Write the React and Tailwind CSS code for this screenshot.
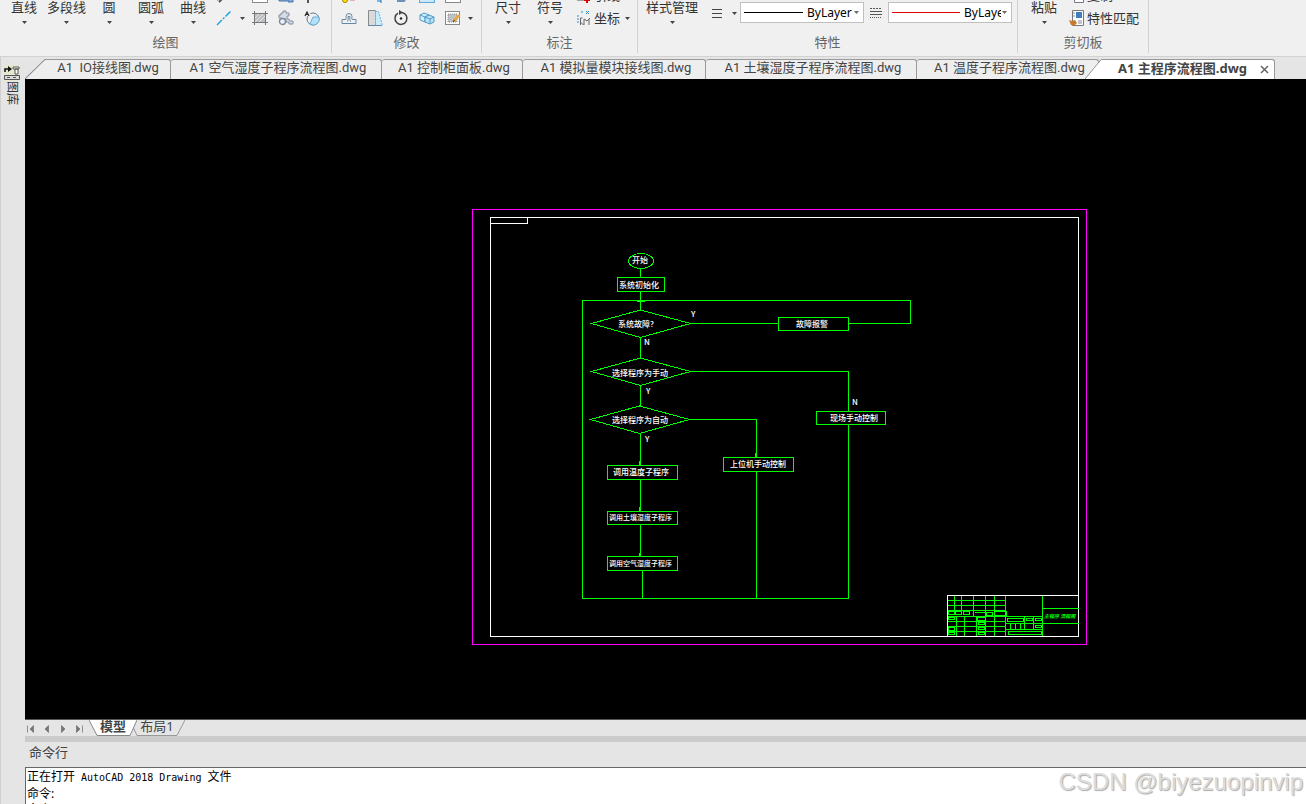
import clsx from 'clsx'

/* ── Small shared bits ───────────────────────────────── */
function Caret({ className }) {
  return (
    <svg viewBox="0 0 5 3" className={clsx('h-[3px] w-[5px] shrink-0', className)} aria-hidden="true">
      <path d="M0 0h5L2.5 3z" fill="#444" />
    </svg>
  )
}

function Icon({ children }) {
  return (
    <svg viewBox="0 0 16 16" className="h-4 w-4 shrink-0" fill="none" stroke="#555" aria-hidden="true">
      {children}
    </svg>
  )
}

function IconButton({ label, children }) {
  return (
    <button type="button" aria-label={label} className="flex h-4 w-4 shrink-0">
      <Icon>{children}</Icon>
    </button>
  )
}

function BigButton({ children, className }) {
  return (
    <button type="button" className={clsx('flex h-[26px] shrink-0 flex-col items-center whitespace-nowrap text-[13px] leading-[14px]', className)}>
      {children}
      <Caret className="mt-[7px]" />
    </button>
  )
}

function Group({ title, className, children }) {
  return (
    <section className="flex h-[53px] shrink-0 flex-col border-r border-[#d2d2d2]">
      <div className={clsx('flex h-[34px] items-start', className)}>{children}</div>
      <h2 className="text-center text-[13px] leading-4 text-[#666]">{title}</h2>
    </section>
  )
}

/* Two rows of tools; the upper one slides under the window's top edge */
function ToolRows({ children, className }) {
  return <div className={clsx('flex h-[26px] flex-col justify-end gap-[7px]', className)}>{children}</div>
}

/* ── Ribbon ──────────────────────────────────────────── */
function LineCombo({ label, lineClass, className }) {
  return (
    <div className="relative mt-0.5 -ml-px">
      <select
        aria-label={label}
        className={clsx('block h-[21px] w-[124px] appearance-none rounded-none border border-[#c0c0c0] bg-white text-[12px] leading-[18px] text-black', className)}
      >
        <option>ByLayer</option>
      </select>
      <span className={clsx('pointer-events-none absolute top-[10px] left-[4px] h-px', lineClass)} />
      <Caret className="pointer-events-none absolute top-[9px] right-[5px] opacity-80" />
    </div>
  )
}

function DrawGroup() {
  return (
    <Group title="绘图" className="w-[331px] pl-[3px]">
      <BigButton className="w-[42px]">直线</BigButton>
      <BigButton className="w-[43px]">多段线</BigButton>
      <BigButton className="w-[42px]">圆</BigButton>
      <BigButton className="w-[42px]">圆弧</BigButton>
      <BigButton className="w-[42px]">曲线</BigButton>
      <ToolRows className="ml-0.5">
        <div className="flex gap-[10px]">
          <IconButton label="射线"><path d="M3 15l4-4M1 13l3-3" strokeWidth="2" /></IconButton>
          <span />
          <IconButton label="矩形"><rect x="0.5" y="3.5" width="15" height="12" fill="#fff" stroke="#888" /></IconButton>
          <IconButton label="块"><path d="M1 9h8v5H1zM10 10h5v5h-5z" fill="#7fa9d6" stroke="#4a74a8" /></IconButton>
          <IconButton label="点"><path d="M4 12v4" strokeWidth="2" /></IconButton>
        </div>
        <div className="flex items-center gap-[10px]">
          <IconButton label="构造线">
            <path d="M1 15L15 1" stroke="#1ba1e2" strokeWidth="1.4" strokeDasharray="7 1.5 2 1.5" />
          </IconButton>
          <Caret className="-mr-[3px] -ml-0.5" />
          <IconButton label="图案填充">
            <rect x="2.5" y="3.5" width="11" height="9" fill="#bcc0c3" stroke="#777" />
            <path d="M2.5 1v14M13.5 1v14M0 3.5h16M0 12.5h16" stroke="#777" />
            <path d="M3 8l4-4M3 12l8-8M7 12l6-6" stroke="#f5f5f5" strokeWidth="0.7" />
          </IconButton>
          <IconButton label="面域">
            <path d="M5 1h3v2h3v3h-2v3h2l1 2h3v3h-4v-2H8V9H4V8H1V5h2V3h2z" fill="#d7dde6" stroke="#8290a0" />
            <circle cx="4.5" cy="11.5" r="3" fill="#eef" stroke="#7a8797" strokeWidth="1.3" />
          </IconButton>
          <IconButton label="修订云线">
            <circle cx="9" cy="9" r="6" stroke="#557f9c" />
            <path d="M9 7h6a6 6 0 01-9 7z" fill="#b5e0fa" stroke="#5b9dc8" strokeWidth="0.8" />
            <path d="M0 0h6v6H0z" fill="#f0f0f0" stroke="none" />
            <path d="M1 6l2-4 2 4M2 4.5h2" stroke="#222" strokeWidth="1.2" />
          </IconButton>
        </div>
      </ToolRows>
    </Group>
  )
}

function ModifyGroup() {
  return (
    <Group title="修改" className="w-[149px] pl-[9px]">
      <ToolRows>
        <div className="flex gap-[10px]">
          <IconButton label="删除">
            <circle cx="4" cy="13" r="2.5" fill="#ffe000" stroke="#a08a00" />
            <path d="M9 13h5" stroke="#c77" />
          </IconButton>
          <IconButton label="移动"><path d="M14 10v6M10 14h4" stroke="#1479c9" /></IconButton>
          <IconButton label="修剪"><path d="M4 14h7l2-3" stroke="#6e90b4" strokeWidth="2" /></IconButton>
          <IconButton label="阵列"><rect x="0.5" y="4.5" width="15" height="11" fill="#cbe9fb" stroke="#5aa9d6" /></IconButton>
          <IconButton label="分解"><rect x="0.5" y="4.5" width="15" height="11" fill="#fff" stroke="#888" /></IconButton>
        </div>
        <div className="flex items-center gap-[10px]">
          <IconButton label="偏移">
            <path d="M1 9.5h3c2 0 1-1 1-3a3 3 0 016 0c0 2-1 3 1 3h3" stroke="#6389a8" />
            <path d="M1 13.5h14v-4M1 13.5v-4M6 11.5c2-1 1-3 1-5h2c0 2-1 4 1 5" stroke="#6389a8" />
          </IconButton>
          <IconButton label="镜像">
            <path d="M1.5 0.5h7v15h-7z" fill="#d9dadb" stroke="#888" />
            <path d="M8.5 1.5h3l4 14h-7z" fill="#c8ecfc" stroke="#6ab4dc" strokeDasharray="2 1" />
            <path d="M1 15.5h14" stroke="#68a" />
          </IconButton>
          <IconButton label="旋转">
            <path d="M5 3.2A6 6 0 109 2.5" stroke="#444" strokeWidth="1.5" />
            <path d="M6 0v5l4-2.5z" fill="#444" stroke="none" />
            <circle cx="8" cy="8.5" r="1.2" fill="#222" stroke="none" />
          </IconButton>
          <IconButton label="复制">
            <path d="M1 5l4-2 5 2v5l-4 2-5-2zM1 5l5 2v5M6 7l4-2" fill="#d6effc" stroke="#4f9cc9" />
            <path d="M6 7l4-2 5 2v5l-4 2-5-2zM6 7l5 2v5M11 9l4-2" fill="#b9e2f8" stroke="#4f9cc9" />
          </IconButton>
          <IconButton label="编辑图案填充">
            <rect x="0.5" y="1.5" width="14" height="13" fill="#fff" stroke="#888" />
            <rect x="3" y="4" width="9" height="8" fill="#bfc2c5" stroke="#888" strokeDasharray="1 1" />
            <path d="M8.5 11l6-6" stroke="#eba53a" strokeWidth="2.5" />
            <path d="M8 12l1.5-2" stroke="#333" />
          </IconButton>
          <Caret className="-ml-[3px]" />
        </div>
      </ToolRows>
    </Group>
  )
}

function AnnotateGroup() {
  return (
    <Group title="标注" className="w-[155px] pl-[5px]">
      <BigButton className="w-[42px]">尺寸</BigButton>
      <BigButton className="w-[42px]">符号</BigButton>
      <ToolRows className="ml-[5px] text-[13px] leading-4">
        <button type="button" className="flex gap-0.5 whitespace-nowrap">
          <Icon>
            <path d="M1 13h8" />
            <path d="M8 13h6M11 10v6" stroke="#d00" strokeWidth="2" />
          </Icon>
          引线
        </button>
        <button type="button" className="flex items-center gap-0.5 whitespace-nowrap">
          <Icon>
            <path d="M4.5 15V8h2M4.5 12l3 3M8 15V9l3 2 3-3M13 9v6" stroke="#666" />
            <path d="M5 2h2M10 1l3 3M13 1l-3 3M1 6h2M1 9h2M1 12h2" stroke="#2d8fd0" />
          </Icon>
          坐标
          <Caret className="ml-[3px]" />
        </button>
      </ToolRows>
    </Group>
  )
}

function PropertiesGroup() {
  return (
    <Group title="特性" className="w-[379px] pl-[7px]">
      <BigButton className="w-[54px]">样式管理</BigButton>
      <button type="button" aria-label="线宽" className="mt-[5px] ml-[10px] flex h-4 items-center gap-[7px]">
        <Icon><path d="M3 4.5h10M3 8.5h10M3 12.5h10" stroke="#444" strokeWidth="1.2" /></Icon>
        <Caret />
      </button>
      <span className="w-1" />
      <LineCombo label="线型" lineClass="w-[59px] bg-black" className="pr-1 pl-[66px]" />
      <button type="button" aria-label="线型管理" className="mr-[5px] ml-1 mt-[5px] flex">
        <Icon>
          <path d="M2 3.5h12" strokeDasharray="2 1" />
          <path d="M2 6.5h12M2 9.5h12" />
          <path d="M2 12.5h12" strokeDasharray="1 1" />
        </Icon>
      </button>
      <LineCombo label="颜色" lineClass="w-[68px] bg-[#e00000]" className="pr-[10px] pl-[75px]" />
    </Group>
  )
}

function ClipboardGroup() {
  return (
    <Group title="剪切板" className="w-[130px] pl-[5px]">
      <BigButton className="w-[42px]">粘贴</BigButton>
      <ToolRows className="ml-1 text-[13px] leading-4">
        <button type="button" className="flex gap-0.5 whitespace-nowrap">
          <Icon><path d="M1.5 3.5h8v9h-8zM5.5 6.5h9v9h-9z" fill="#fff" stroke="#778" /></Icon>
          复制
        </button>
        <button type="button" className="flex gap-0.5 whitespace-nowrap">
          <Icon>
            <path d="M3.5 0.5h11v15h-11z" fill="#fff" stroke="#777" />
            <path d="M7 2h6v6H7z" fill="#3f7fc0" stroke="none" />
            <path d="M4 3h2M4 6h2M9 11h4M9 13h4" stroke="#889" />
            <path d="M0 10l3 1 3-1 2 3-3 3-3-1z" fill="#c87a2c" stroke="none" />
          </Icon>
          特性匹配
        </button>
      </ToolRows>
    </Group>
  )
}

/* ── File tabs ───────────────────────────────────────── */
const FILES = [
  { name: 'A1  IO接线图.dwg', width: 'w-[125px]' },
  { name: 'A1 空气湿度子程序流程图.dwg', width: 'w-[211px] pl-1' },
  { name: 'A1 控制柜面板.dwg', width: 'w-[141px] pl-1' },
  { name: 'A1 模拟量模块接线图.dwg', width: 'w-[183px] pl-1' },
  { name: 'A1 土壤湿度子程序流程图.dwg', width: 'w-[211px] pl-1' },
  { name: 'A1 温度子程序流程图.dwg', width: 'w-[182px] pl-1' },
]

function Slant({ fill, className }) {
  return (
    <svg viewBox="0 0 20 20" preserveAspectRatio="none" className={clsx('h-5 shrink-0', className)} aria-hidden="true">
      <path d="M0 20L19 0.5H20V20z" fill={fill} />
      <path d="M0 20L19 0.5H20" fill="none" stroke="#8c8c8c" />
    </svg>
  )
}

function FileTabs() {
  return (
    <nav className="flex h-[22px] items-end overflow-hidden bg-[#e5e5e5] text-[13px] leading-4 text-[#444]">
      <Slant fill="#eee" className="w-[21px]" />
      {FILES.map((f, i) => (
        <button
          key={f.name}
          type="button"
          className={clsx(
            "flex h-5 shrink-0 justify-center rounded-t-[3px] border-t border-r border-[#999] bg-[#eee] font-['Roboto','Noto_Sans_CJK_SC',sans-serif] whitespace-pre",
            i === 0 && 'rounded-tl-none',
            f.width,
          )}
        >
          {f.name}
        </button>
      ))}
      <Slant fill="#fff" className="relative -ml-[14px] w-[17px]" />
      <div className="flex h-5 w-[173px] shrink-0 items-start justify-between rounded-tr-[3px] border-t border-r border-[#999] bg-white pr-[5px] pl-4">
        <button type="button" className="font-bold whitespace-nowrap">A1 主程序流程图.dwg</button>
        <button type="button" aria-label="关闭" className="flex pt-[5px]">
          <svg viewBox="0 0 9 9" className="h-[9px] w-[9px]" aria-hidden="true">
            <path d="M1 1l7 7M8 1L1 8" stroke="#666" strokeWidth="1.5" />
          </svg>
        </button>
      </div>
    </nav>
  )
}

/* ── Side palette ────────────────────────────────────── */
function Sidebar() {
  return (
    <aside className="w-[25px] shrink-0 border-l border-[#d0d0d0] bg-[#e5e5e5] pt-[8px]">
      <button type="button" className="flex w-[22px] flex-col items-center text-[12px] leading-4 text-[#333]">
        <Icon>
          <rect width="16" height="16" fill="#e6e8d0" stroke="none" />
          <path d="M1 7V4h4" strokeWidth="1.5" stroke="#111" />
          <path d="M4 1l4 3-4 3z" fill="#111" stroke="none" />
          <path d="M9 2h6v2H9zM11 4h3v5h-3z" fill="#fff" stroke="#555" />
          <path d="M0.5 10.5h15v4h-15zM3 12.5h3M9 12.5h3" fill="#ddd" stroke="#555" />
        </Icon>
        <span className="[text-orientation:sideways] [writing-mode:vertical-rl]">图库</span>
      </button>
    </aside>
  )
}

/* ── Drawing ─────────────────────────────────────────── */
const BOXES = [
  [617, 277, 47, 14], [778, 317, 70, 13], [816, 411, 69, 13], [723, 457, 70, 14],
  [607, 465, 70, 14], [607, 511, 70, 13], [607, 556, 70, 14],
]
const DIAMONDS = [[640, 310, 323], [640, 358, 371], [639, 406, 419]]

const LABELS = [
  ['开始', 632, 263], ['系统初始化', 619, 288], ['系统故障?', 618, 327],
  ['选择程序为手动', 612, 376], ['选择程序为自动', 612, 423], ['故障报警', 796, 327],
  ['现场手动控制', 830, 421], ['上位机手动控制', 730, 467], ['调用温度子程序', 613, 475],
  ['调用土壤湿度子程序', 609, 520, 7], ['调用空气湿度子程序', 609, 566, 7],
  ['Y', 691, 317], ['N', 644, 345], ['Y', 646, 394], ['Y', 645, 442], ['N', 852, 405],
]

function TitleBlock() {
  return (
    <g>
      <g stroke="#0f0">
        <path d="M947.5 600.5h58M947.5 605.5h58M947.5 610.5h58M947.5 616.5h95M947.5 621.5h58M947.5 626.5h58M947.5 631.5h58" />
        <path d="M954.5 596v15M961.5 596v15M973.5 596v20M985.5 596v40M994.5 596v40M1005.5 596v40M1042.5 596v40" />
        <path d="M956.5 616v20M964.5 616v20M976.5 616v20M1024.5 616v7M1033.5 616v14" />
        <path d="M1042.5 608.5h36M1042.5 623.5h36M1005.5 623.5h37M1005.5 629.5h37" />
        <path d="M1010.5 623v6M1015.5 623v6M1020.5 623v6M1024.5 623v6" />
        <path d="M948.5 611.5h6v3h-6zM955.5 611.5h6v3h-6zM963.5 611.5h6v3h-6zM974.5 612.5h11M986.5 612.5h6v3h-6zM994.5 611.5h12v4h-12z" />
        <path d="M948.5 617.5h6v2h-6zM948.5 627.5h6v3h-6zM948.5 632.5h6v2h-6z" />
        <path d="M977.5 617.5h8v3h-8zM978.5 622.5h6v2h-6zM978.5 627.5h6v2h-6zM978.5 632.5h6v2h-6z" />
        <path d="M1007.5 618.5h16v3h-16zM1026.5 618.5h6v2h-6zM1035.5 618.5h6v2h-6zM1035.5 625.5h6v2h-6zM1008.5 631.5h33v3h-33z" />
      </g>
      <text x="1044" y="618" fontSize="5" fontWeight="700" fontStyle="italic" fill="#0f0">主程序 流程图</text>
    </g>
  )
}

function Drawing() {
  return (
    <main className="min-h-0 flex-1 bg-black">
      <svg
        viewBox="25 79 1281 640"
        preserveAspectRatio="xMinYMin meet"
        className="h-full w-full font-['Noto_Sans_CJK_SC',sans-serif]"
        shapeRendering="crispEdges"
        fill="none"
      >
        <rect x="472.5" y="209.5" width="614" height="435" stroke="#f0f" />
        <rect x="490.5" y="217.5" width="588" height="419" stroke="#fff" />
        <path d="M490.5 223.5h37v-6" stroke="#fff" />
        <TitleBlock />
        <path d="M947.5 636v-40.5h131" stroke="#fff" />

        <g stroke="#0f0">
          <ellipse cx="641" cy="261" rx="12.5" ry="7.5" />
          {BOXES.map(([x, y, w, h]) => (
            <rect key={`${x}-${y}`} x={x + 0.5} y={y + 0.5} width={w} height={h} />
          ))}
          {DIAMONDS.map(([x, top, mid]) => (
            <path key={top} d={`M${x - 48.5} ${mid + 0.5}L${x + 0.5} ${top}L${x + 50.5} ${mid + 0.5}L${x + 0.5} ${top + 27.5}z`} />
          ))}
          {/* main column */}
          <path d="M640.5 268v9M640.5 291v19M640.5 337v21M640.5 385v21M640.5 433v32M640.5 479v32M640.5 524v32M642.5 570v28" />
          <path d="M637 301.5h8M639.5 461v4M639.5 507v4M639.5 553v3M755.5 453v4" />
          {/* branches and the return loop */}
          <path d="M690 323.5h88M848 323.5h62.5v-23h-328v298h266v-174M690 371.5h158.5v40M690 419.5h66.5v38M756.5 471v127" />
        </g>

        <g fill="#fff" fontWeight="500">
          {LABELS.map(([text, x, y, size = 8]) => (
            <text key={`${x}-${y}`} x={x} y={y} fontSize={size}>{text}</text>
          ))}
        </g>
      </svg>
    </main>
  )
}

/* ── Layout tabs and command line ────────────────────── */
const NAV = [
  { label: '第一个', d: 'M1.5 1.5v7M7.5 1.5v7L4 5z' },
  { label: '上一个', d: 'M6.5 1.5v7L3 5z' },
  { label: '下一个', d: 'M3.5 1.5v7L7 5z' },
  { label: '最后一个', d: 'M8.5 1.5v7M2.5 1.5v7L6 5z' },
]

function LayoutTabs() {
  return (
    <nav className="flex h-[17px] shrink-0 border-t border-[#555] bg-[#e5e5e5] text-[13px] leading-[12px] text-[#444]">
      <div className="mr-[5px] flex items-start gap-[6px] pt-[4px] pl-[1px]">
        {NAV.map(n => (
          <button key={n.label} type="button" aria-label={n.label}>
            <svg viewBox="0 0 10 10" className="h-[10px] w-[10px]" aria-hidden="true">
              <path d={n.d} fill="#777" stroke="#777" strokeWidth="0.8" />
            </svg>
          </button>
        ))}
      </div>
      <button type="button" className="relative z-10 flex w-[48px] justify-center font-bold">
        <svg viewBox="0 0 48 17" className="absolute inset-0 -z-10 h-[17px] w-[48px]" aria-hidden="true">
          <path d="M0 0l8 15.5h33L48 0" fill="#fff" stroke="#888" />
        </svg>
        模型
      </button>
      <button type="button" className="relative -ml-1 flex w-[52px] justify-center pr-1">
        <svg viewBox="0 0 52 17" className="absolute inset-0 h-[17px] w-[52px]" aria-hidden="true">
          <path d="M0 7l4 8.5h40L52 0" fill="none" stroke="#999" />
        </svg>
        布局1
      </button>
    </nav>
  )
}

function CommandLine() {
  return (
    <section className="shrink-0">
      <div className="h-[6px] bg-[#cbcbcb]" />
      <h2 className="h-[25px] bg-[#e5e5e5] pl-1 text-[13px] leading-5 text-[#444]">命令行</h2>
      <div className="h-[37px] overflow-hidden border-t border-l border-[#666] bg-white pt-[1px] pl-[1px] text-[12px] leading-4 text-black">
        <p>正在打开<span className="font-['DejaVu_Sans_Mono',monospace] text-[10px]"> AutoCAD 2018 Drawing </span>文件</p>
        <p>命令:</p>
        <p>命令:</p>
      </div>
    </section>
  )
}

export default function App() {
  return (
    <div lang="zh-CN" className="relative flex h-screen flex-col overflow-hidden bg-[#f0f0f0] font-['Noto_Sans','Noto_Sans_CJK_SC',sans-serif] text-[#333]">
      <header className="flex h-[57px] shrink-0 overflow-hidden border-b border-[#d2d2d2]">
        <DrawGroup />
        <ModifyGroup />
        <AnnotateGroup />
        <PropertiesGroup />
        <ClipboardGroup />
      </header>
      <div className="flex min-h-0 flex-1">
        <Sidebar />
        <div className="flex min-w-0 flex-1 flex-col">
          <FileTabs />
          <Drawing />
          <LayoutTabs />
          <CommandLine />
        </div>
      </div>
      <p className="pointer-events-none absolute right-[3px] bottom-[6px] font-['Liberation_Sans',sans-serif] text-[24px] leading-8 text-[#dcdcdc] [text-shadow:1px_1px_1px_#aaa]">
        CSDN @biyezuopinvip
      </p>
    </div>
  )
}
